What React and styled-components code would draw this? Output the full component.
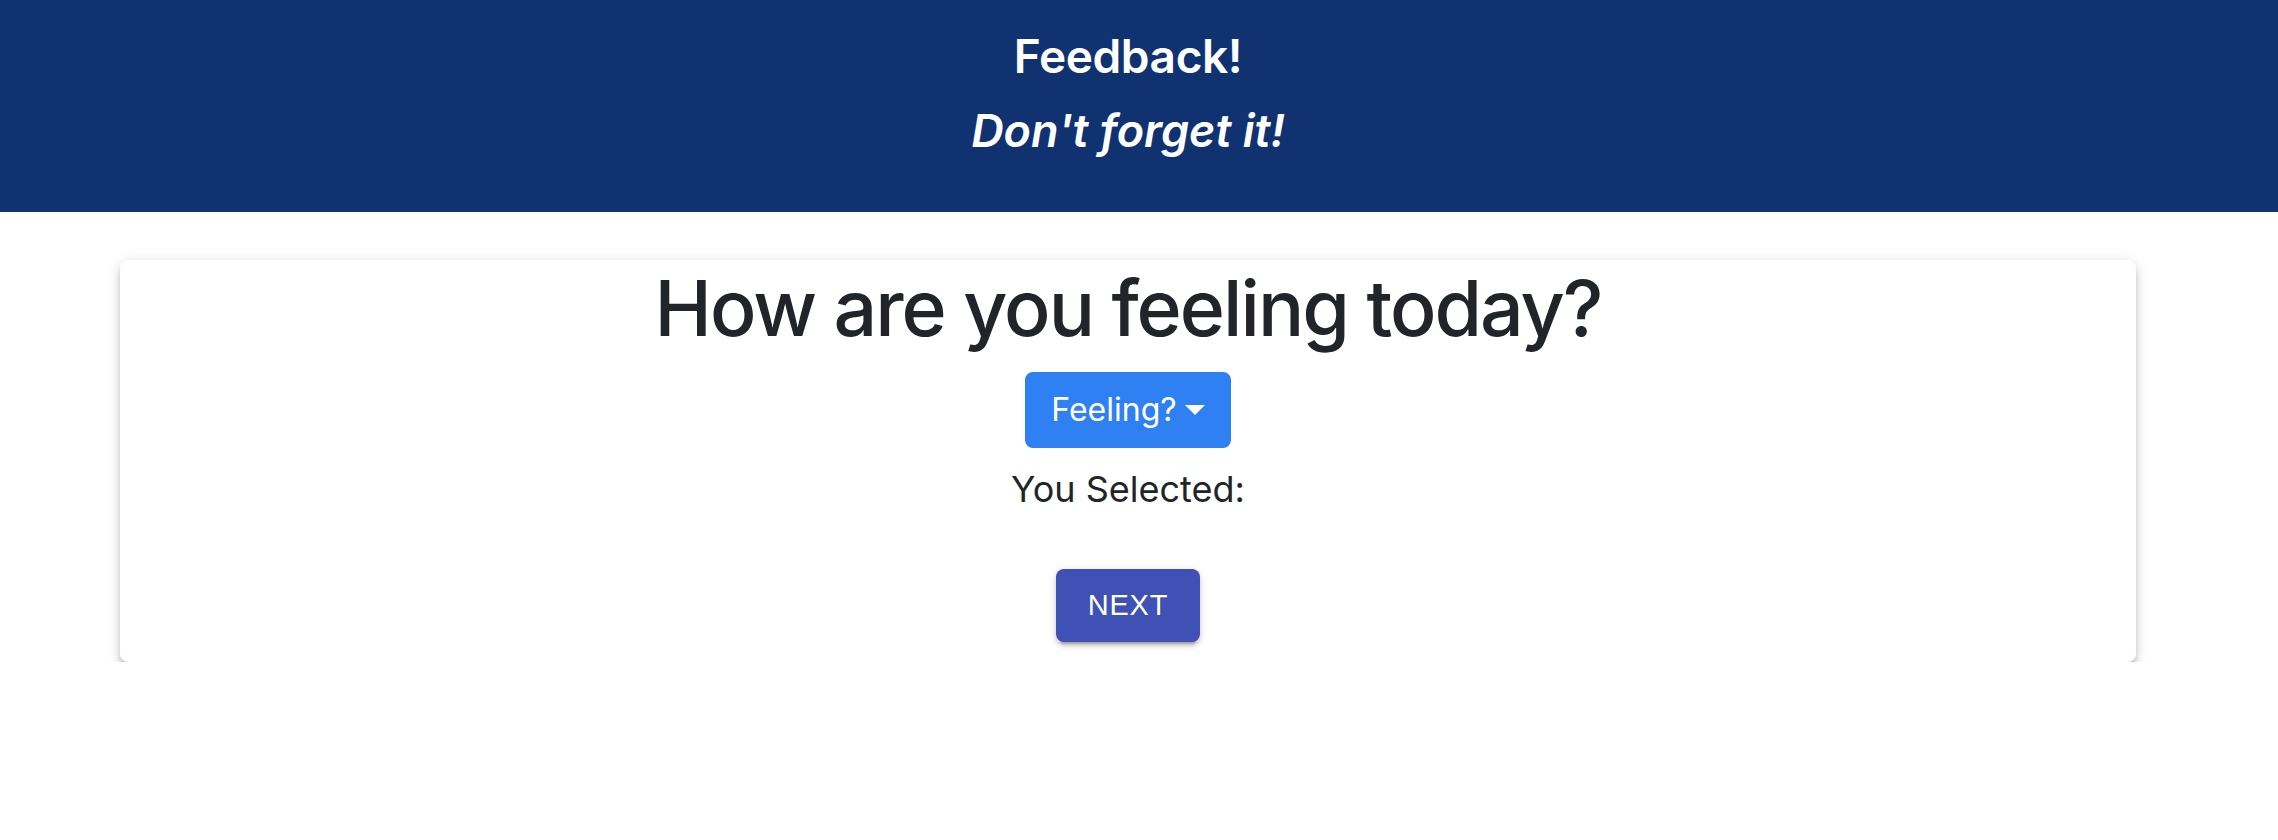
import React from 'react'
import styled, { createGlobalStyle } from 'styled-components'

const GlobalStyle = createGlobalStyle`
  body {
    margin: 0;
    background: #ffffff;
    font-family: Inter, "Noto Sans", sans-serif;
    color: #212529;
  }
`

const Header = styled.header`
  background-color: #103270;
  height: 212px;
  padding-right: 22px;
  box-sizing: border-box;
  display: flex;
  flex-direction: column;
  align-items: center;
  padding-top: 28px;
  color: #ffffff;
`

const Title = styled.h4`
  margin: 0;
  font-size: 46px;
  font-weight: 600;
  line-height: 56px;
  letter-spacing: -0.4px;
`

const Subtitle = styled.h5`
  margin: 20px 0 0;
  font-size: 45px;
  font-weight: 600;
  font-style: italic;
  line-height: 54px;
`

const Main = styled.main`
  padding: 48px 142px 0 120px;
`

const Card = styled.section`
  background: #ffffff;
  border-radius: 8px;
  box-shadow: 0 6px 6px -4px rgba(0, 0, 0, 0.25), 0 6px 8px 0 rgba(0, 0, 0, 0.16),
    0 2px 16px 0 rgba(0, 0, 0, 0.1);
  display: flex;
  flex-direction: column;
  align-items: center;
  padding: 2px 0 20px;
`

const Question = styled.h1`
  margin: 0;
  font-size: 77px;
  font-weight: 500;
  line-height: 1.2;
  letter-spacing: -2px;
  color: #212529;
`

const DropdownButton = styled.button`
  margin-top: 18px;
  display: inline-flex;
  align-items: center;
  background-color: #2f80f3;
  border: 2px solid #2f80f3;
  border-radius: 8px;
  color: #ffffff;
  font-family: Inter, "Noto Sans", sans-serif;
  font-size: 32px;
  line-height: 48px;
  padding: 12px 24px;
  cursor: pointer;

  &::after {
    content: '';
    display: inline-block;
    margin-left: 8px;
    border-top: 10px solid #ffffff;
    border-left: 10px solid transparent;
    border-right: 10px solid transparent;
  }
`

const Selected = styled.p`
  margin: 19px 0 0;
  font-size: 36px;
  line-height: 44px;
  color: #212529;
`

const NextButton = styled.button`
  margin-top: 58px;
  background-color: #3f51b5;
  color: #ffffff;
  border: none;
  border-radius: 8px;
  padding: 12px 32px;
  font-family: "Liberation Sans", Arial, sans-serif;
  font-size: 29px;
  font-weight: 400;
  line-height: 49px;
  letter-spacing: 0.8px;
  text-transform: uppercase;
  box-shadow: 0 6px 2px -4px rgba(0, 0, 0, 0.2), 0 4px 4px 0 rgba(0, 0, 0, 0.14),
    0 2px 10px 0 rgba(0, 0, 0, 0.12);
  cursor: pointer;
`

export default function App() {
  return (
    <>
      <GlobalStyle />
      <Header>
        <Title>Feedback!</Title>
        <Subtitle>Don't forget it!</Subtitle>
      </Header>
      <Main>
        <Card>
          <Question>How are you feeling today?</Question>
          <DropdownButton>Feeling?</DropdownButton>
          <Selected>You Selected:</Selected>
          <NextButton>Next</NextButton>
        </Card>
      </Main>
    </>
  )
}
